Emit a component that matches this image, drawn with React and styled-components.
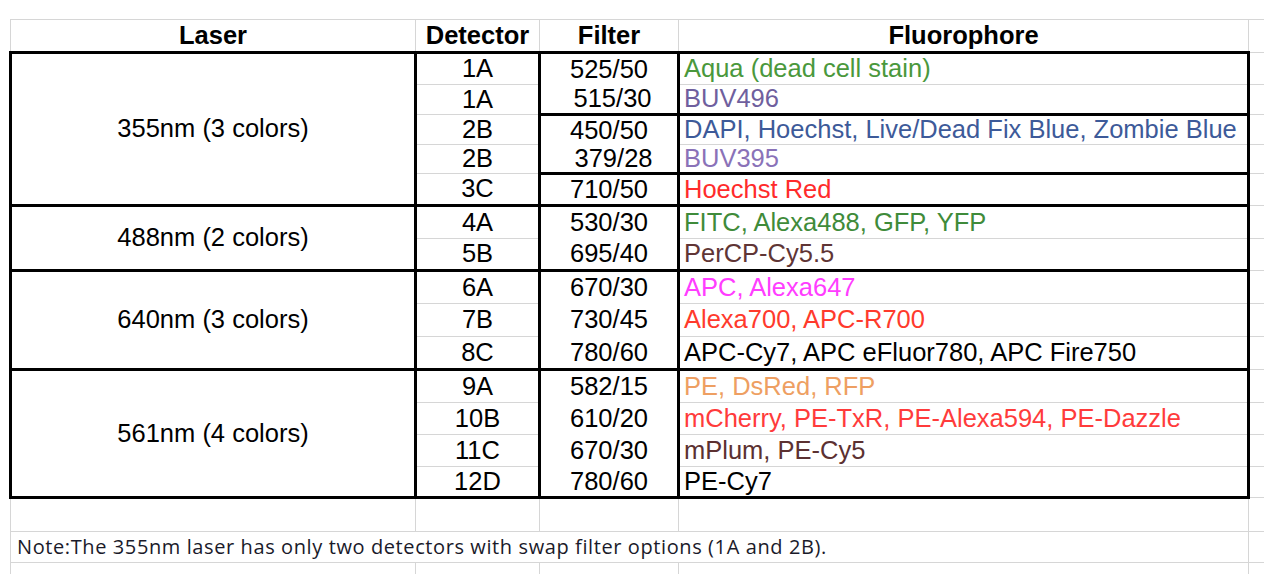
import React from 'react'
import styled, { createGlobalStyle } from 'styled-components'

const GRID = '#d6d6d6'
const THICK = '3px solid #000'
const THIN = `1px solid ${GRID}`

const groups = [
    { laser: '355nm (3 colors)', rows: [
        { det: '1A', filter: '525/50', fluor: 'Aqua (dead cell stain)', color: '#4a983c', h: 32, box: true },
        { det: '1A', filter: '515/30', nudge: 7, fluor: 'BUV496', color: '#6f5f9e', h: 30 },
        { det: '2B', filter: '450/50', fluor: 'DAPI, Hoechst, Live/Dead Fix Blue, Zombie Blue', color: '#3d5a99', h: 30, box: true },
        { det: '2B', filter: '379/28', nudge: 9, fluor: 'BUV395', color: '#8a72b8', h: 29 },
        { det: '3C', filter: '710/50', fluor: 'Hoechst Red', color: '#ff2b2b', h: 32, box: true },
    ]},
    { laser: '488nm (2 colors)', rows: [
        { det: '4A', filter: '530/30', fluor: 'FITC, Alexa488, GFP, YFP', color: '#3f8b3a', h: 33, box: true },
        { det: '5B', filter: '695/40', fluor: 'PerCP-Cy5.5', color: '#603535', h: 32 },
    ]},
    { laser: '640nm (3 colors)', rows: [
        { det: '6A', filter: '670/30', fluor: 'APC, Alexa647', color: '#ff3dff', h: 33, box: true },
        { det: '7B', filter: '730/45', fluor: 'Alexa700, APC-R700', color: '#ff3a2c', h: 33 },
        { det: '8C', filter: '780/60', fluor: 'APC-Cy7, APC eFluor780, APC Fire750', color: '#000', h: 33 },
    ]},
    { laser: '561nm (4 colors)', rows: [
        { det: '9A', filter: '582/15', fluor: 'PE, DsRed, RFP', color: '#ee9f62', h: 33, box: true },
        { det: '10B', filter: '610/20', fluor: 'mCherry, PE-TxR, PE-Alexa594, PE-Dazzle', color: '#ff3b3b', h: 32 },
        { det: '11C', filter: '670/30', fluor: 'mPlum, PE-Cy5', color: '#5c3131', h: 32 },
        { det: '12D', filter: '780/60', fluor: 'PE-Cy7', color: '#000', h: 31 },
    ]},
]

const App = () => {
    const lastGroup = groups.length - 1

    return (
        <Page>
            <GlobalStyle />
            <Sheet>
                <colgroup>
                    <col style={{ width: 405 }} />
                    <col style={{ width: 124 }} />
                    <col style={{ width: 139 }} />
                    <col style={{ width: 570 }} />
                    <col style={{ width: 30 }} />
                </colgroup>
                <tbody>
                    <Row $h={33}>
                        <HeadCell>Laser</HeadCell>
                        <HeadCell>Detector</HeadCell>
                        <HeadCell>Filter</HeadCell>
                        <HeadCell>Fluorophore</HeadCell>
                        <SpareCell />
                    </Row>
                    {groups.map((group, g) =>
                        group.rows.map((row, i) => {
                            const last = g === lastGroup && i === group.rows.length - 1
                            return (
                                <Row $h={row.h} key={`${g}-${i}`}>
                                    {i === 0 && <LaserCell rowSpan={group.rows.length}>{group.laser}</LaserCell>}
                                    <DetectorCell $start={i === 0} $last={last}>{row.det}</DetectorCell>
                                    <FilterCell $box={row.box} $last={last} $nudge={row.nudge || 0}>{row.filter}</FilterCell>
                                    <FluorCell $box={row.box} $last={last} $color={row.color}>{row.fluor}</FluorCell>
                                    <SpareCell />
                                </Row>
                            )
                        })
                    )}
                    <Row $h={34}>
                        <BlankCell />
                        <BlankCell />
                        <BlankCell />
                        <BlankCell />
                        <SpareCell />
                    </Row>
                    <Row $h={31}>
                        <NoteCell colSpan={4}>Note:The 355nm laser has only two detectors with swap filter options (1A and 2B).</NoteCell>
                        <SpareCell />
                    </Row>
                    <Row $h={31}>
                        <BlankCell />
                        <BlankCell />
                        <BlankCell />
                        <BlankCell />
                        <SpareCell />
                    </Row>
                </tbody>
            </Sheet>
        </Page>
    )
}

const GlobalStyle = createGlobalStyle`
  html, body {
    margin: 0;
    padding: 0;
    background: #fff;
    overflow: hidden;
  }
`

const Page = styled.main`
   width: 1264px;
   height: 574px;
   overflow: hidden;
   padding: 19px 0 0 9px;
   box-sizing: border-box;
   font-family: 'Liberation Sans', Arial, sans-serif;
   color: #000;
`

const Sheet = styled.table`
   border-collapse: collapse;
   table-layout: fixed;
   width: 1268px;
   font-size: 25.5px;
`

const Row = styled.tr`
   height: ${p => p.$h}px;
`

const Cell = styled.td`
   padding: 0;
   line-height: 1;
   white-space: nowrap;
   overflow: visible;
   vertical-align: middle;
`

const HeadCell = styled(Cell)`
   border: ${THIN};
   font-weight: bold;
   text-align: center;
`

const LaserCell = styled(Cell)`
   border: ${THICK};
   text-align: center;
`

const DetectorCell = styled(Cell)`
   text-align: center;
   border-left: ${THICK};
   border-right: ${THICK};
   border-top: ${p => (p.$start ? THICK : THIN)};
   border-bottom: ${p => (p.$last ? THICK : THIN)};
`

const FilterCell = styled(Cell)`
   text-align: center;
   padding-left: ${p => p.$nudge}px;
   border-left: ${THICK};
   border-right: ${THICK};
   border-top: ${p => (p.$box ? THICK : 'none')};
   border-bottom: ${p => (p.$last ? THICK : 'none')};
`

const FluorCell = styled(Cell)`
   text-align: left;
   padding-left: 4px;
   color: ${p => p.$color};
   border-left: ${THICK};
   border-right: ${THICK};
   border-top: ${p => (p.$box ? THICK : THIN)};
   border-bottom: ${p => (p.$last ? THICK : THIN)};
`

const SpareCell = styled(Cell)`
   border-top: ${THIN};
   border-bottom: ${THIN};
   border-left: ${THIN};
`

const BlankCell = styled(Cell)`
   border: ${THIN};
`

const NoteCell = styled(Cell)`
   border: ${THIN};
   padding-left: 6px;
   font-family: 'Open Sans', 'Noto Sans', sans-serif;
   font-size: 20px;
   letter-spacing: 0.6px;
   color: #1a1a2a;
`

export default App
